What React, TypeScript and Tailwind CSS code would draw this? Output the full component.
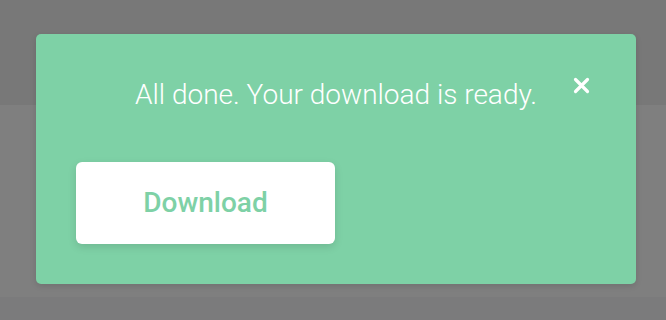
export default function App() {
  return (
    <div className="relative h-[320px] w-[666px] overflow-hidden font-['Roboto',sans-serif]">
      <div className="flex h-full flex-col">
        <div className="h-[105px] bg-[#787878]" />
        <div className="h-[192px] bg-[#7f7f7f]" />
        <div className="flex-1 bg-[#7b7b7c]" />
      </div>

      <div className="absolute left-[36px] top-[34px] h-[250px] w-[600px] rounded-[5px] bg-[#7ed1a6] shadow-[0_2px_6px_rgba(0,0,0,0.12)]">
        <p className="pt-[45px] text-center text-[28px] font-light leading-[32px] text-white">
          All done. Your download is ready.
        </p>
        <button className="absolute right-[46px] top-[43px] flex h-[17px] w-[17px] items-center justify-center text-white">
          <svg viewBox="0 0 17 17" className="h-[17px] w-[17px]">
            <path d="M2.5 2.5 L14.5 14.5 M14.5 2.5 L2.5 14.5" stroke="currentColor" strokeWidth="3.2" strokeLinecap="round" />
          </svg>
        </button>
        <button className="ml-[40px] mt-[51px] flex h-[82px] w-[259px] items-center justify-center rounded-[6px] bg-white text-[28px] font-medium text-[#7ed1a6] shadow-[0_3px_8px_rgba(0,0,0,0.12)]">
          Download
        </button>
      </div>
    </div>
  );
}
